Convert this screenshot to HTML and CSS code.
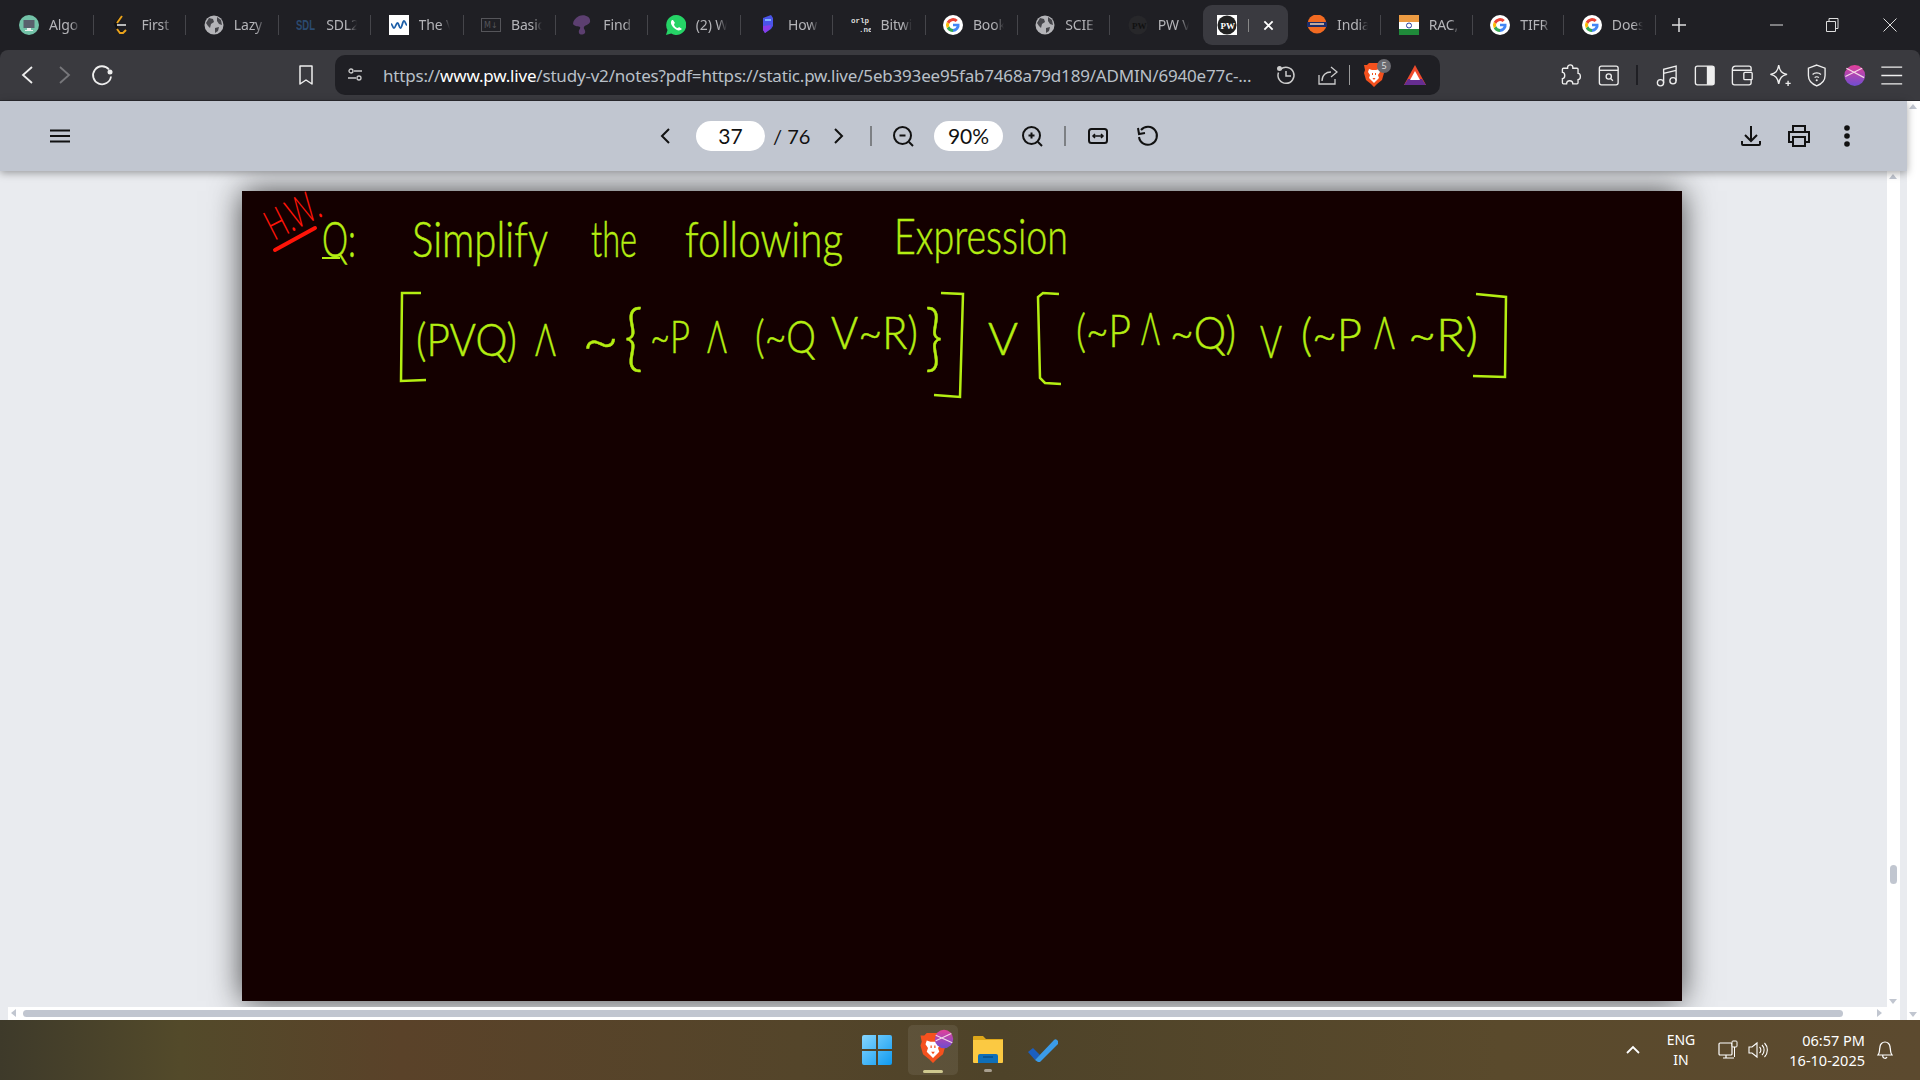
FILE: index.html
```html
<!DOCTYPE html>
<html lang="en">
<head>
    <meta charset="UTF-8">
    <title>PW notes</title>
    <link rel="stylesheet" href="styles.css">
</head>
<body>
    <svg class="defs" width="0" height="0">
        <symbol id="globe" viewBox="0 0 20 20">
            <circle cx="10" cy="10" r="9.500" fill="#b4b4b8"/>
            <path d="M5 3l4 1 1 3-3 2-1 4-2-2-2-3zM13 2l4 3 1 5-3-1-2-3zM11 13l4-1-1 4-3 2z" fill="#45454a"/>
        </symbol>
        <symbol id="google" viewBox="0 0 20 20">
            <circle cx="10" cy="10" r="10" fill="#fff"/>
            <path d="M16.500 8.700H10v2.600h3.700a3.900 3.900 0 0 1-3.700 2.600V17a7 7 0 0 0 6.500-8.300z" fill="#4285f4"/>
            <path d="M10 13.900a3.900 3.900 0 0 1-3.700-2.600L3.800 13.200A7 7 0 0 0 10 17z" fill="#34a853"/>
            <path d="M6.300 11.300a3.900 3.900 0 0 1 0-2.600L3.800 6.800a7 7 0 0 0 0 6.400z" fill="#fbbc05"/>
            <path d="M6.300 8.700A3.900 3.900 0 0 1 12.600 7L14.800 5A7 7 0 0 0 3.800 6.800z" fill="#ea4335"/>
        </symbol>
        <symbol id="lion" viewBox="0 0 20 24">
            <path d="M5 0h10l2 2 3 0-1 5 1 3-2 7-5 4-3 3-3-3-5-4-2-7 1-3-1-5 3 0z" fill="#f4511e"/>
            <path d="M5 6l3 1h4l3-1 1 3-2 3 1 3-3 3-2 2-2-2-3-3 1-3-2-3z" fill="#fff"/>
            <path d="M8 10h1v2H8zM11 10h1v2h-1zM8.500 15h3L10 17z" fill="#f4511e"/>
        </symbol>
    </svg>

    <!-- Tabs -->
    <div class="tabbar">
        <div class="tab"><svg class="fav" viewBox="0 0 20 20"><circle cx="10" cy="10" r="10" fill="#73c2a8"/><rect x="4.500" y="5" width="11" height="8" fill="#59606d"/><path d="M8 13h4v2h2v1H6v-1h2z" fill="#e8f2ee"/></svg><span class="tab-label">Algo</span></div>
        <div class="tab"><svg class="fav" viewBox="0 0 20 20"><path d="M11 1L4 9l3 6 5 3" fill="none" stroke="#111" stroke-width="2"/><path d="M11 1l-5 7" stroke="#e9a21b" stroke-width="2"/><path d="M6 10h9" stroke="#b8b8b8" stroke-width="2"/><path d="M6 14l3 4h3l3-3" fill="none" stroke="#e9a21b" stroke-width="2"/></svg><span class="tab-label">First</span></div>
        <div class="tab"><svg class="fav"><use href="#globe"/></svg><span class="tab-label">Lazy</span></div>
        <div class="tab"><svg class="fav" viewBox="0 0 20 20"><text class="fav-sdl" x="0" y="15" textLength="19" lengthAdjust="spacingAndGlyphs">SDL</text></svg><span class="tab-label">SDL2</span></div>
        <div class="tab"><svg class="fav" viewBox="0 0 20 20"><rect width="20" height="20" fill="#fff"/><path d="M2 9c1.500 0 1.500 4 3 4s2-5 3.500-5 1.500 5 3 5 2-7 3.500-7 1.500 4 3 4" fill="none" stroke="#1d5fa8" stroke-width="1.800"/></svg><span class="tab-label">The V</span></div>
        <div class="tab"><svg class="fav" viewBox="0 0 20 20"><rect x="0.500" y="3.500" width="19" height="13" fill="none" stroke="#55555a"/><text class="fav-md" x="3" y="13">M↓</text></svg><span class="tab-label">Basic</span></div>
        <div class="tab"><svg class="fav" viewBox="0 0 20 20"><path d="M6 1c6-2 12 1 11 6-1 3-5 3-6 5s2 3 1 6c-2 2-5 2-6 0-1-3 2-4 1-6-1-1-5 0-7-3C0 6 2 3 6 1z" fill="#5c3f70"/></svg><span class="tab-label">Find</span></div>
        <div class="tab"><svg class="fav" viewBox="0 0 20 20"><path d="M10 0a10 10 0 0 0-8.500 15L0 20l5.200-1.400A10 10 0 1 0 10 0z" fill="#25d366"/><path d="M6 5c-2 2-1 5 2 8s6 3 8 1l-3-2-1 1c-2 0-4-2-4-4l1-1-2-3z" fill="#fff"/></svg><span class="tab-label">(2) W</span></div>
        <div class="tab"><svg class="fav" viewBox="0 0 20 20"><path d="M5 3l8-3 2 3v8l-2 3-3 2-3 2-2-3z" fill="#4a54e8"/><path d="M5 11l8-1-1 4-5 4-2-3z" fill="#8a3ce8"/><path d="M7 4h6v2H7z" fill="#7fb0ff"/></svg><span class="tab-label">How</span></div>
        <div class="tab"><svg class="fav" viewBox="0 0 20 20"><text class="fav-orlp" x="0" y="8">orlp</text><text class="fav-orlp" x="8" y="17">.net</text></svg><span class="tab-label">Bitwi</span></div>
        <div class="tab"><svg class="fav"><use href="#google"/></svg><span class="tab-label">Book</span></div>
        <div class="tab"><svg class="fav"><use href="#globe"/></svg><span class="tab-label">SCIE</span></div>
        <div class="tab tab-noline"><svg class="fav" viewBox="0 0 20 20"><circle cx="10" cy="10" r="9.500" fill="#27272a"/><text class="fav-pw fav-pw-dim" x="4" y="14">PW</text></svg><span class="tab-label">PW V</span></div>
        <div class="tab tab-active">
            <svg class="fav" viewBox="0 0 20 20"><rect width="20" height="20" fill="#fff"/><circle cx="10" cy="10" r="9.500" fill="#222"/><text class="fav-pw" x="3.500" y="14">PW</text></svg>
            <span class="tab-bar"></span>
            <svg class="tab-close" viewBox="0 0 12 12"><path d="M1.500 1.500l9 9M10.500 1.500l-9 9" stroke="#fff" stroke-width="2"/></svg>
        </div>
        <div class="tab tab-tight"><svg class="fav" viewBox="0 0 20 20"><circle cx="10" cy="9" r="9.500" fill="#f26a21"/><path d="M0 7h20v5H0z" fill="#1c2d6b"/><path d="M3 9h14" stroke="#f8d5b0" stroke-width="1.500"/></svg><span class="tab-label">India</span></div>
        <div class="tab tab-tight"><svg class="fav" viewBox="0 0 20 20"><rect y="0" width="20" height="7" fill="#ec9b42"/><rect y="7" width="20" height="7" fill="#fff"/><rect y="14" width="20" height="6" fill="#1f8a3a"/><circle cx="10" cy="10.500" r="2.500" fill="none" stroke="#2a3f9d"/></svg><span class="tab-label">RAC,</span></div>
        <div class="tab tab-tight"><svg class="fav"><use href="#google"/></svg><span class="tab-label">TIFR</span></div>
        <div class="tab tab-tight"><svg class="fav"><use href="#google"/></svg><span class="tab-label">Does</span></div>
        <svg class="new-tab" viewBox="0 0 14 14"><path d="M7 0v14M0 7h14" stroke="#ddd" stroke-width="1.500"/></svg>
        <div class="win-btns">
            <svg viewBox="0 0 14 14"><path d="M0 7h13" stroke="#ddd"/></svg>
            <svg viewBox="0 0 14 14"><path d="M1.500 3.500h9v10h-9zM4 3.500v-3h9v10h-2.500" fill="none" stroke="#ddd"/></svg>
            <svg class="win-close" viewBox="0 0 14 14"><path d="M.5.500l13 13M13.500.500l-13 13" stroke="#ddd"/></svg>
        </div>
    </div>

    <!-- Address bar -->
    <div class="toolbar">
        <svg class="nav-btn" viewBox="0 0 38 24"><path d="M24 4l-9 8 9 8" fill="none" stroke="#eee" stroke-width="1.800"/></svg>
        <svg class="nav-btn" viewBox="0 0 38 24"><path d="M14 4l9 8-9 8" fill="none" stroke="#77777b" stroke-width="1.800"/></svg>
        <svg class="nav-btn nav-reload" viewBox="0 0 38 24"><path d="M26 6.500a9 9 0 1 0 2 7" fill="none" stroke="#eee" stroke-width="1.800"/><circle cx="27" cy="9" r="2.500" fill="#eee"/></svg>
        <svg class="nav-btn bookmark" viewBox="0 0 38 24"><path d="M13 3h12v18l-6-4-6 4z" fill="none" stroke="#eee" stroke-width="1.500" stroke-linejoin="round"/></svg>
        <div class="urlbar">
            <svg class="url-tune" viewBox="0 0 16 16"><circle cx="4" cy="4" r="2" fill="none" stroke="#ccc" stroke-width="1.300"/><path d="M7 4h8M1 11h8" stroke="#ccc" stroke-width="1.300"/><circle cx="12" cy="11" r="2" fill="none" stroke="#ccc" stroke-width="1.300"/></svg>
            <div class="url-text">https://<b>www.pw.live</b>/study-v2/notes?pdf=https://static.pw.live/5eb393ee95fab7468a79d189/ADMIN/6940e77c-...</div>
            <svg class="url-ico url-history" viewBox="0 0 20 20"><path d="M4.500 4.500a8 8 0 1 1-2 3" fill="none" stroke="#ccc" stroke-width="1.500"/><path d="M10 6v5h5" fill="none" stroke="#ccc" stroke-width="1.500"/><circle cx="3.500" cy="3.500" r="2.500" fill="#ccc"/></svg>
            <svg class="url-ico url-share" viewBox="0 0 20 20"><path d="M1 10v9h16v-5" fill="none" stroke="#ccc" stroke-width="1.300"/><path d="M4 16c0-6 4-9 9-9M13 2l6 5-6 5" fill="none" stroke="#ccc" stroke-width="1.300"/></svg>
            <span class="url-sep"></span>
            <div class="shield"><svg class="shield-lion"><use href="#lion"/></svg><span class="shield-badge">5</span></div>
            <svg class="url-bat" viewBox="0 0 22 20"><path d="M11 0L0 20h22z" fill="#ef4b2c"/><path d="M0 20h22l-4-6H4z" fill="#662d91"/><path d="M11 6l5 9H6z" fill="#fff"/></svg>
        </div>
        <svg class="tool puzzle" viewBox="0 0 24 24"><path d="M9 4c0-3 5-3 5 0v1h4a1 1 0 0 1 1 1v4c3 0 3 6 0 6v3a1 1 0 0 1-1 1h-4c0-4-6-4-6 0H5a1 1 0 0 1-1-1v-4c3 0 3-6 0-6V6a1 1 0 0 1 1-1h4z" fill="none" stroke="#eee" stroke-width="1.300"/></svg>
        <svg class="tool" viewBox="0 0 24 24"><rect x="3" y="3" width="18" height="18" rx="2" fill="none" stroke="#eee" stroke-width="1.300"/><path d="M3 7h18" stroke="#eee" stroke-width="1.300"/><circle cx="12" cy="13" r="2.500" fill="none" stroke="#eee" stroke-width="1.300"/><path d="M14 15l2 2" stroke="#eee" stroke-width="1.300"/></svg>
        <span class="tool-sep"></span>
        <svg class="tool" viewBox="0 0 24 24"><circle cx="6" cy="19" r="3" fill="none" stroke="#eee" stroke-width="1.300"/><circle cx="18" cy="17" r="3" fill="none" stroke="#eee" stroke-width="1.300"/><path d="M9 19V6l12-3v14M9 10l12-3" fill="none" stroke="#eee" stroke-width="1.300"/></svg>
        <svg class="tool" viewBox="0 0 24 24"><rect x="3" y="3" width="18" height="18" rx="2" fill="none" stroke="#eee" stroke-width="1.300"/><rect x="14" y="3" width="7" height="18" fill="#eee"/></svg>
        <svg class="tool" viewBox="0 0 24 24"><path d="M21 8V5a2 2 0 0 0-2-2H6a3 3 0 0 0-3 3v13a2 2 0 0 0 2 2h14a2 2 0 0 0 2-2v-3M3 7h18" fill="none" stroke="#eee" stroke-width="1.300"/><rect x="14" y="9" width="8" height="7" rx="1" fill="none" stroke="#eee" stroke-width="1.300"/></svg>
        <svg class="tool" viewBox="0 0 24 24"><path d="M11 2c1 6 3 8 8 9-5 1-7 3-8 9-1-6-3-8-8-9 5-1 7-3 8-9z" fill="none" stroke="#eee" stroke-width="1.300"/><path d="M20 17v5M17.500 19.500h5" stroke="#eee" stroke-width="1.300"/></svg>
        <svg class="tool" viewBox="0 0 24 24"><path d="M12 2l8 3v7c0 5-3 8-8 10-5-2-8-5-8-10V5z" fill="none" stroke="#eee" stroke-width="1.300"/><path d="M8 11c2-2 6-2 8 0M10 14c1-1 3-1 4 0" fill="none" stroke="#eee" stroke-width="1.200"/><circle cx="12" cy="16.500" r="1" fill="#eee"/></svg>
        <svg class="tool" viewBox="0 0 24 24"><defs><linearGradient id="avatar" x1="0" y1="0" x2="0" y2="1"><stop offset="0" stop-color="#e2409a"/><stop offset="1" stop-color="#6f4dd0"/></linearGradient></defs><circle cx="12" cy="12" r="10" fill="url(#avatar)"/><path d="M4 5l17 9M3 13L19 5" stroke="#f4d6e6" stroke-width="1.200"/></svg>
        <svg class="tool" viewBox="0 0 24 24"><path d="M2 4h20M2 12h20M2 20h20" stroke="#eee" stroke-width="1.300"/></svg>
    </div>

    <div class="viewer">
        <div class="doc">
            <!-- PDF toolbar -->
            <div class="pdfbar">
                <svg class="pdf-menu" viewBox="0 0 20 14"><path d="M0 1.500h20M0 7h20M0 12.500h20" stroke="#111" stroke-width="2"/></svg>
                <svg class="pdf-btn pdf-prev" viewBox="0 0 24 24"><path d="M15 5l-7 7 7 7" fill="none" stroke="#111" stroke-width="2"/></svg>
                <div class="pill pill-page">37</div>
                <div class="page-total">/ 76</div>
                <svg class="pdf-btn pdf-next" viewBox="0 0 24 24"><path d="M9 5l7 7-7 7" fill="none" stroke="#111" stroke-width="2"/></svg>
                <span class="pdf-sep sep-a"></span>
                <svg class="pdf-btn pdf-zoomout" viewBox="0 0 24 24"><circle cx="11.500" cy="11.500" r="8.500" fill="none" stroke="#111" stroke-width="2"/><path d="M18 18l4 4" stroke="#111" stroke-width="2"/><path d="M8.500 11.500h6" stroke="#111" stroke-width="2"/></svg>
                <div class="pill pill-zoom">90%</div>
                <svg class="pdf-btn pdf-zoomin" viewBox="0 0 24 24"><circle cx="11.500" cy="11.500" r="8.500" fill="none" stroke="#111" stroke-width="2"/><path d="M18 18l4 4" stroke="#111" stroke-width="2"/><path d="M8.500 11.500h6M11.500 8.500v6" stroke="#111" stroke-width="2"/></svg>
                <span class="pdf-sep sep-b"></span>
                <svg class="pdf-btn pdf-fit" viewBox="0 0 24 24"><rect x="3" y="5" width="18" height="14" rx="2.500" fill="none" stroke="#111" stroke-width="2"/><path d="M7 12h10M9 10l-2 2 2 2M15 10l2 2-2 2" fill="none" stroke="#111" stroke-width="1.500"/></svg>
                <svg class="pdf-btn pdf-rotate" viewBox="0 0 24 24"><path d="M6 6a9 9 0 1 1-2 7" fill="none" stroke="#111" stroke-width="2"/><path d="M3 4l1 6 6-1" fill="none" stroke="#111" stroke-width="2"/></svg>
                <div class="pdf-right">
                    <svg class="pdf-btn" viewBox="0 0 24 24"><path d="M12 2v14M6 11l6 6 6-6M3 17v3a1 1 0 0 0 1 1h16a1 1 0 0 0 1-1v-3" fill="none" stroke="#111" stroke-width="2"/></svg>
                    <svg class="pdf-btn" viewBox="0 0 24 24"><path d="M6 8V2h12v6M6 18H2V8h20v10h-4" fill="none" stroke="#111" stroke-width="2"/><rect x="6" y="13" width="12" height="9" fill="none" stroke="#111" stroke-width="2"/></svg>
                    <svg class="pdf-btn" viewBox="0 0 24 24"><circle cx="12" cy="4" r="2.800" fill="#111"/><circle cx="12" cy="12" r="2.800" fill="#111"/><circle cx="12" cy="20" r="2.800" fill="#111"/></svg>
                </div>
            </div>

            <div class="doc-body">
                <div class="pages">
                    <div class="page">
                        <svg class="ink" viewBox="242 191 1440 810" width="1440" height="810">
                            <g class="ink-red">
                                <text class="hw" transform="rotate(-27 274 241)" x="274" y="241" textLength="56" lengthAdjust="spacingAndGlyphs">H.W.</text>
                            </g>
                            <path d="M275 250L315 228" stroke="#ff1408" stroke-width="4" stroke-linecap="round"/>

                            <g class="ink-green">
                                <text class="l1" x="322" y="257" textLength="34" lengthAdjust="spacingAndGlyphs">Q:</text>
                                <path d="M322 258h18" stroke-width="2"/>
                                <text class="l1" x="412" y="257" textLength="136" lengthAdjust="spacingAndGlyphs">Simplify</text>
                                <text class="l1" x="591" y="257" textLength="46" lengthAdjust="spacingAndGlyphs">the</text>
                                <text class="l1" x="685" y="257" textLength="158" lengthAdjust="spacingAndGlyphs">following</text>
                                <text class="l1" x="894" y="254" textLength="174" lengthAdjust="spacingAndGlyphs">Expression</text>

                                <polyline points="421,293 402,293 401,381 426,380" stroke-width="2.500"/>
                                <polyline points="941,293 963,294 960,397 934,395" stroke-width="2.500"/>
                                <polyline points="1059,294 1043,293 1038,297 1040,378 1045,383 1061,384" stroke-width="2.500"/>
                                <polyline points="1476,294 1506,297 1505,377 1473,376" stroke-width="2.500"/>

                                <text class="l2" x="416" y="356" textLength="101" lengthAdjust="spacingAndGlyphs">(PVQ)</text>
                                <text class="l2" x="535" y="356" textLength="21" lengthAdjust="spacingAndGlyphs">Λ</text>
                                <text class="l2 tilde" x="582" y="362" textLength="37" lengthAdjust="spacingAndGlyphs">~</text>
                                <text class="l2 brace" x="624" y="362" textLength="19" lengthAdjust="spacingAndGlyphs">{</text>
                                <text class="l2" x="650" y="353" textLength="40" lengthAdjust="spacingAndGlyphs">~P</text>
                                <text class="l2" x="707" y="353" textLength="20" lengthAdjust="spacingAndGlyphs">Λ</text>
                                <text class="l2" x="755" y="353" textLength="61" lengthAdjust="spacingAndGlyphs">(~Q</text>
                                <text class="l2" x="831" y="349" textLength="87" lengthAdjust="spacingAndGlyphs">V~R)</text>
                                <text class="l2 brace" x="925" y="362" textLength="18" lengthAdjust="spacingAndGlyphs">}</text>
                                <text class="l2" x="988" y="355" textLength="30" lengthAdjust="spacingAndGlyphs">V</text>
                                <text class="l2" x="1076" y="347" textLength="55" lengthAdjust="spacingAndGlyphs">(~P</text>
                                <text class="l2" x="1141" y="345" textLength="19" lengthAdjust="spacingAndGlyphs">Λ</text>
                                <text class="l2" x="1170" y="349" textLength="66" lengthAdjust="spacingAndGlyphs">~Q)</text>
                                <text class="l2" x="1260" y="358" textLength="22" lengthAdjust="spacingAndGlyphs">V</text>
                                <text class="l2" x="1301" y="351" textLength="61" lengthAdjust="spacingAndGlyphs">(~P</text>
                                <text class="l2" x="1374" y="349" textLength="21" lengthAdjust="spacingAndGlyphs">Λ</text>
                                <text class="l2" x="1408" y="351" textLength="70" lengthAdjust="spacingAndGlyphs">~R)</text>
                            </g>
                        </svg>
                    </div>
                </div>
                <div class="vscroll">
                    <span class="arrow-up"></span>
                    <span class="vthumb"></span>
                    <span class="arrow-down"></span>
                </div>
            </div>
            <div class="hscroll">
                <span class="arrow-left"></span>
                <span class="hthumb"></span>
                <span class="arrow-right"></span>
            </div>
        </div>
        <div class="outer-scroll">
            <span class="arrow-up"></span>
            <span class="arrow-down"></span>
        </div>
    </div>

    <!-- Windows taskbar -->
    <div class="taskbar">
        <svg class="task-start" viewBox="0 0 30 30">
            <defs><linearGradient id="win" x1="0" y1="0" x2="1" y2="1"><stop offset="0" stop-color="#86d6ff"/><stop offset="1" stop-color="#0f9af0"/></linearGradient></defs>
            <path d="M0 2a2 2 0 0 1 2-2h12v14H0zM16 0h12a2 2 0 0 1 2 2v12H16zM0 16h14v14H2a2 2 0 0 1-2-2zM16 16h14v12a2 2 0 0 1-2 2H16z" fill="url(#win)"/>
        </svg>
        <div class="task-tile">
            <svg class="tile-lion"><use href="#lion"/></svg>
            <svg class="tile-avatar" viewBox="0 0 24 24"><circle cx="12" cy="12" r="10" fill="url(#avatar)"/><path d="M3 8l18 8M3 14L20 6" stroke="#f4d6e6" stroke-width="1.200"/></svg>
            <span class="tile-bar"></span>
        </div>
        <div class="task-folder">
            <svg viewBox="0 0 30 28"><path d="M0 2a1 1 0 0 1 1-1h9l3 3h17v4H0z" fill="#dda71a"/><path d="M0 5h30v22a1 1 0 0 1-1 1H1a1 1 0 0 1-1-1z" fill="#fbc942"/><path d="M5 21a2 2 0 0 1 2-2h16a2 2 0 0 1 2 2v7H5z" fill="#0f6fb8"/><path d="M10 22h10" stroke="#073f6e"/></svg>
            <span class="tile-dot"></span>
        </div>
        <svg class="task-todo" viewBox="0 0 30 24"><path d="M0 14l5-4 7 7-5 5z" fill="#1b5fc1"/><path d="M7 22l19-20a2 2 0 0 1 3 0l1 1a2 2 0 0 1 0 3L12 24a2 2 0 0 1-2 0l-3-2z" fill="#3b9be8"/></svg>

        <div class="tray">
            <svg class="tray-chev" viewBox="0 0 16 10"><path d="M2 8l6-6 6 6" fill="none" stroke="#fff" stroke-width="1.800"/></svg>
            <div class="tray-lang"><span>ENG</span><span>IN</span></div>
            <svg class="tray-net" viewBox="0 0 20 20"><rect x="1" y="3" width="13" height="12" rx="1" fill="none" stroke="#fff" stroke-width="1.200"/><path d="M5 18h11M8 15v3" stroke="#fff" stroke-width="1.200"/><rect x="14" y="1" width="5" height="6" rx="1" fill="#5a4a2c" stroke="#fff"/><path d="M16.500 7v10" stroke="#fff"/></svg>
            <svg class="tray-vol" viewBox="0 0 20 20"><path d="M1 7h3l5-4v14l-5-4H1z" fill="none" stroke="#fff" stroke-width="1.100"/><path d="M11.500 7a4 4 0 0 1 0 6M14 5a7 7 0 0 1 0 10M16.500 3a10 10 0 0 1 0 14" fill="none" stroke="#fff" stroke-width="1.100"/></svg>
            <div class="tray-clock"><span>06:57 PM</span><span>16-10-2025</span></div>
            <svg class="tray-bell" viewBox="0 0 16 18"><path d="M1 14c2-2 1-4 2-8a5 5 0 0 1 10 0c1 4 0 6 2 8zM6 14a2 2 0 0 0 4 2" fill="none" stroke="#fff" stroke-width="1.200"/></svg>
        </div>
    </div>
</body>
</html>
```

FILE: styles.css
```css
* {
    box-sizing: border-box;
}
html, body {
    margin: 0;
    width: 1920px;
    height: 1080px;
    overflow: hidden;
}
body {
    display: flex;
    flex-direction: column;
    font-family: "Noto Sans", "Open Sans", sans-serif;
    background-color: #1f1f24;
}
svg {
    display: block;
    flex: none;
}
.defs {
    position: absolute;
}

/* tabs */
.tabbar {
    height: 50px;
    flex: none;
    background-color: #1f1f24;
    display: flex;
    align-items: center;
    padding-left: 1.6px;
}
.tab {
    width: 92.4px;
    height: 20px;
    padding-left: 17.4px;
    display: flex;
    align-items: center;
    gap: 10px;
    border-right: 1px solid #45454a;
}
.tab-tight {
    width: 91.6px;
}
.tab-noline {
    border-right: none;
}
.tab-active {
    width: 85px;
    height: 40px;
    margin-right: 2px;
    padding-left: 14px;
    gap: 0;
    border-right: none;
    border-radius: 9px;
    background-color: #3a3a40;
}
.tab-bar {
    width: 1px;
    height: 13px;
    margin-left: 11px;
    background-color: #888;
}
.tab-close {
    width: 11px;
    height: 11px;
    margin-left: 14px;
}
.fav {
    width: 20px;
    height: 20px;
}
.tab-label {
    width: 31px;
    margin-bottom: 2px;
    overflow: hidden;
    white-space: nowrap;
    font-size: 14px;
    letter-spacing: -0.15px;
    color: #b4b4b8;
    -webkit-mask-image: linear-gradient(to right, #000 70%, transparent 100%);
    mask-image: linear-gradient(to right, #000 70%, transparent 100%);
}
.fav-sdl {
    font: bold 14px "Liberation Sans", sans-serif;
    fill: #2b4a6f;
}
.fav-md {
    font: 8px "DejaVu Sans", sans-serif;
    fill: #55555a;
}
.fav-orlp {
    font: bold 7.5px "Liberation Mono", monospace;
    fill: #ddd;
}
.fav-pw {
    font: bold 9px "Liberation Serif", serif;
    fill: #fff;
}
.fav-pw-dim {
    fill: #111;
}
.new-tab {
    width: 14px;
    height: 14px;
    margin-left: 16px;
}
.win-btns {
    display: flex;
    margin-left: 84px;
    gap: 41px;
}
.win-btns svg {
    width: 14px;
    height: 14px;
}
.win-btns .win-close {
    margin-left: 3px;
}

/* address bar */
.toolbar {
    height: 51px;
    flex: none;
    background-color: #3a3a3f;
    border-bottom: 1px solid #2b2b2f;
    border-radius: 8px 8px 0 0;
    display: flex;
    align-items: center;
    padding-left: 8px;
}
.nav-btn {
    width: 38px;
    height: 24px;
}
.nav-reload {
    margin-left: -1px;
}
.bookmark {
    margin-left: 166px;
}
.urlbar {
    width: 1105px;
    height: 40px;
    margin-left: 10px;
    border-radius: 10px;
    background-color: #1f1f24;
    display: flex;
    align-items: center;
}
.url-tune {
    width: 16px;
    height: 16px;
    margin-left: 12px;
}
.url-text {
    width: 871px;
    margin-left: 20px;
    font-size: 17px;
    letter-spacing: -0.19px;
    white-space: nowrap;
    color: #b9c0c8;
}
.url-text b {
    font-weight: 400;
    color: #fff;
}
.url-ico {
    width: 20px;
    height: 20px;
}
.url-history {
    margin-left: 22px;
}
.url-share {
    margin-left: 22px;
}
.url-sep {
    width: 1px;
    height: 20px;
    margin-left: 11px;
    background-color: #999;
}
.shield {
    position: relative;
    margin-left: 14px;
}
.shield-lion {
    width: 20px;
    height: 24px;
}
.shield-badge {
    position: absolute;
    left: 13px;
    top: -4px;
    width: 14px;
    height: 14px;
    border-radius: 50%;
    background-color: #6a6a70;
    color: #ddd;
    font-size: 9px;
    line-height: 14px;
    text-align: center;
}
.url-bat {
    width: 22px;
    height: 20px;
    margin-left: 20px;
}
.tool {
    width: 37.5px;
    height: 25px;
}
.puzzle {
    margin-left: 112px;
}
.tool-sep {
    width: 2px;
    height: 20px;
    margin: 0 10px 0 9px;
    background-color: #1f1f24;
}

/* viewer */
.viewer {
    flex: 1;
    display: flex;
    min-height: 0;
}
.doc {
    width: 1907px;
    display: flex;
    flex-direction: column;
    background-color: #e9ebef;
}
.pdfbar {
    height: 70px;
    flex: none;
    background-color: #c1c6d0;
    box-shadow: 0 2px 8px rgba(0, 0, 0, 0.35);
    position: relative;
    z-index: 2;
    display: flex;
    align-items: center;
    font-family: Lato, "Noto Sans", sans-serif;
    color: #111;
}
.pdf-menu {
    width: 20px;
    height: 14px;
    margin-left: 50px;
}
.pdf-btn {
    width: 24px;
    height: 24px;
}
.pdf-prev {
    margin-left: 584px;
}
.pill {
    width: 69px;
    height: 30px;
    border-radius: 15px;
    background-color: #fff;
    font-size: 21px;
    line-height: 30px;
    text-align: center;
}
.pill-page {
    margin-left: 18px;
}
.page-total {
    width: 36px;
    margin-left: 8px;
    font-size: 20px;
    white-space: nowrap;
}
.pdf-next {
    margin-left: 17px;
}
.pdf-sep {
    width: 2px;
    height: 20px;
    background-color: #7d8084;
}
.sep-a {
    margin-left: 20px;
}
.pdf-zoomout {
    margin-left: 19px;
}
.pill-zoom {
    margin-left: 19px;
}
.pdf-zoomin {
    margin-left: 17px;
}
.sep-b {
    margin-left: 20px;
}
.pdf-fit {
    margin-left: 20px;
}
.pdf-rotate {
    margin-left: 25px;
}
.pdf-right {
    margin-left: auto;
    margin-right: 48px;
    display: flex;
    gap: 24px;
}
.doc-body {
    flex: 1;
    display: flex;
    min-height: 0;
}
.pages {
    width: 1887px;
    padding: 20px 0 0 242px;
    overflow: hidden;
}
.page {
    width: 1440px;
    height: 810px;
    background-color: #140000;
    box-shadow: 0 0 30px rgba(0, 0, 0, 0.7);
}
.ink text {
    font-family: Lato, "Noto Sans", sans-serif;
    font-weight: 300;
}
.ink-green {
    fill: #b4ee12;
    stroke: #b4ee12;
    stroke-width: 0.5;
}
.ink-green polyline,
.ink-green path {
    fill: none;
}
.ink-red {
    fill: #ff1408;
}
.hw {
    font-size: 42px;
}
.l1 {
    font-size: 50px;
}
.l2 {
    font-size: 46px;
}
.tilde {
    font-size: 64px;
}
.brace {
    font-size: 72px;
}

/* scrollbars */
.vscroll {
    width: 13px;
    background-color: #fff;
    position: relative;
}
.outer-scroll {
    width: 13px;
    background-color: #fff;
    position: relative;
}
.vthumb {
    position: absolute;
    left: 3px;
    top: 694px;
    width: 7px;
    height: 19px;
    border-radius: 4px;
    background-color: #c1c6d0;
}
.arrow-up, .arrow-down {
    position: absolute;
    left: 2px;
    width: 0;
    height: 0;
    border-left: 4.5px solid transparent;
    border-right: 4.5px solid transparent;
}
.arrow-up {
    top: 3px;
    border-bottom: 5px solid #c1c6d0;
}
.arrow-down {
    bottom: 3px;
    border-top: 5px solid #c1c6d0;
}
.hscroll {
    height: 13px;
    flex: none;
    margin-left: 8px;
    background-color: #fff;
    position: relative;
    margin-right: 7px;
}
.hthumb {
    position: absolute;
    left: 15px;
    top: 3px;
    width: 1820px;
    height: 7px;
    border-radius: 4px;
    background-color: #c1c6d0;
}
.arrow-left, .arrow-right {
    position: absolute;
    top: 2px;
    width: 0;
    height: 0;
    border-top: 4.5px solid transparent;
    border-bottom: 4.5px solid transparent;
}
.arrow-left {
    left: 3px;
    border-right: 5px solid #c1c6d0;
}
.arrow-right {
    left: 1869px;
    border-left: 5px solid #c1c6d0;
}

/* taskbar */
.taskbar {
    height: 60px;
    flex: none;
    background: linear-gradient(to right, #3e3a2a 0, #534a2a 180px, #5a4229 400px, #54452a 800px, #4e4329 1000px, #5a4a2c 1500px, #5c4a2f 1920px);
    display: flex;
    align-items: center;
    color: #fff;
}
.task-start {
    width: 30px;
    height: 30px;
    margin-left: 862px;
}
.task-tile {
    width: 50px;
    height: 50px;
    margin-left: 16px;
    border-radius: 5px;
    background-color: rgba(255, 255, 255, 0.08);
    position: relative;
}
.tile-lion {
    position: absolute;
    left: 12px;
    top: 8px;
    width: 26px;
    height: 30px;
}
.tile-avatar {
    position: absolute;
    left: 25px;
    top: 3px;
    width: 22px;
    height: 22px;
}
.tile-bar {
    position: absolute;
    left: 15px;
    top: 45px;
    width: 20px;
    height: 3px;
    border-radius: 2px;
    background-color: #cfc98f;
}
.task-folder {
    width: 30px;
    height: 30px;
    margin-left: 15px;
    position: relative;
}
.tile-dot {
    position: absolute;
    left: 11px;
    top: 34px;
    width: 8px;
    height: 3px;
    border-radius: 2px;
    background-color: #a89f8f;
}
.task-todo {
    width: 30px;
    height: 24px;
    margin-left: 25px;
}
.tray {
    margin-left: auto;
    padding-right: 27px;
    display: flex;
    align-items: center;
}
.tray-chev {
    width: 16px;
    height: 10px;
}
.tray-lang {
    width: 40px;
    margin-left: 20px;
    display: flex;
    flex-direction: column;
    align-items: center;
    font-size: 14px;
    line-height: 20px;
}
.tray-net {
    width: 20px;
    height: 20px;
    margin-left: 17px;
}
.tray-vol {
    width: 20px;
    height: 20px;
    margin-left: 10px;
}
.tray-clock {
    width: 90px;
    margin-left: 7px;
    display: flex;
    flex-direction: column;
    align-items: flex-end;
    font-size: 14.5px;
    line-height: 20px;
    white-space: nowrap;
}
.tray-bell {
    width: 16px;
    height: 18px;
    margin-left: 12px;
}
```
